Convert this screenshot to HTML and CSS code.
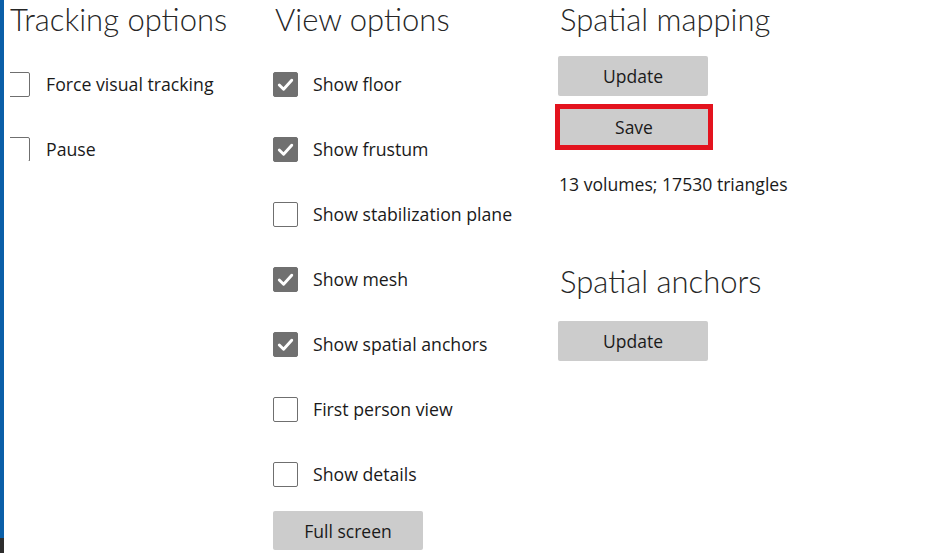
FILE: index.html
```html
<!DOCTYPE html>
<html>
<head>
<meta charset="utf-8">
<link rel="stylesheet" href="styles.css">
</head>
<body>
<div class="page">
  <div class="strip"><div class="strip-blue"></div><div class="strip-dark"></div></div>
  <div class="content">
    <section class="col col-tracking">
      <h2 class="heading">Tracking options</h2>
      <ul class="options">
        <li class="option"><span class="box"></span><span class="label">Force visual tracking</span></li>
        <li class="option"><span class="box"></span><span class="label">Pause</span></li>
      </ul>
    </section>
    <section class="col col-view">
      <h2 class="heading">View options</h2>
      <ul class="options">
        <li class="option"><span class="box checked"><svg viewBox="0 0 24 24"><path d="M5.5 12.5 L10 17 L18.5 7.5"/></svg></span><span class="label">Show floor</span></li>
        <li class="option"><span class="box checked"><svg viewBox="0 0 24 24"><path d="M5.5 12.5 L10 17 L18.5 7.5"/></svg></span><span class="label">Show frustum</span></li>
        <li class="option"><span class="box"></span><span class="label">Show stabilization plane</span></li>
        <li class="option"><span class="box checked"><svg viewBox="0 0 24 24"><path d="M5.5 12.5 L10 17 L18.5 7.5"/></svg></span><span class="label">Show mesh</span></li>
        <li class="option"><span class="box checked"><svg viewBox="0 0 24 24"><path d="M5.5 12.5 L10 17 L18.5 7.5"/></svg></span><span class="label">Show spatial anchors</span></li>
        <li class="option"><span class="box"></span><span class="label">First person view</span></li>
        <li class="option"><span class="box"></span><span class="label">Show details</span></li>
      </ul>
      <button class="btn btn-full">Full screen</button>
    </section>
    <section class="col col-spatial">
      <h2 class="heading">Spatial mapping</h2>
      <button class="btn btn-update">Update</button>
      <button class="btn btn-save">Save</button>
      <p class="stats">13 volumes; 17530 triangles</p>
      <h2 class="heading heading-anchors">Spatial anchors</h2>
      <button class="btn btn-update2">Update</button>
    </section>
  </div>
</div>
</body>
</html>
```
FILE: styles.css
```css
* { box-sizing: border-box; }
html, body {
  margin: 0;
  padding: 0;
  background: #ffffff;
  width: 951px;
  height: 553px;
  overflow: hidden;
}
body {
  font-family: "Open Sans", "Noto Sans", sans-serif;
  color: #1a1a1a;
}
.page {
  display: flex;
  height: 553px;
}
.strip {
  width: 4px;
  display: flex;
  flex-direction: column;
}
.strip-blue { flex: 0 0 538px; background: #0a5fa8; }
.strip-dark { flex: 1; background: #2d2d2d; }
.content {
  display: grid;
  grid-template-columns: 263px 285px 1fr;
  padding-left: 6px;
}
.col {
  display: flex;
  flex-direction: column;
  align-items: flex-start;
}
.col-tracking .heading { padding-left: 0; }
.col-tracking .options { overflow: hidden; align-self: stretch; }
.col-tracking .box { margin-left: -5px; }
.col-tracking .label { margin-left: 16px; }
.heading {
  margin: 0;
  font-family: Lato, "Open Sans", sans-serif;
  font-weight: 300;
  font-size: 31px;
  line-height: 38px;
  color: #262626;
  white-space: nowrap;
  padding-left: 2px;
}
.options {
  list-style: none;
  margin: 34px 0 0 0;
  padding: 0;
  display: flex;
  flex-direction: column;
  gap: 41px;
}
.option {
  display: flex;
  align-items: center;
  height: 24px;
}
.box {
  width: 25px;
  height: 25px;
  border: 1px solid #6f6f6f;
  border-radius: 2px;
  background: #fff;
  flex: 0 0 auto;
  display: flex;
  align-items: center;
  justify-content: center;
}
.box.checked {
  background: #707070;
  border-color: #707070;
}
.box svg {
  width: 23px;
  height: 23px;
  fill: none;
  stroke: #ffffff;
  stroke-width: 3;
  stroke-linecap: round;
  stroke-linejoin: round;
}
.label {
  margin-left: 15px;
  font-size: 17.7px;
  line-height: 24px;
  white-space: nowrap;
}
.btn {
  font-family: "Open Sans", "Noto Sans", sans-serif;
  font-size: 17.5px;
  color: #1a1a1a;
  background: #cccccc;
  border: none;
  border-radius: 2px;
  width: 150px;
  height: 40px;
  padding: 0;
  display: flex;
  align-items: center;
  justify-content: center;
}
.btn-full { margin-top: 25px; height: 39px; }
.btn-update { margin-top: 18px; }
.btn-save {
  margin-top: 8px;
  margin-left: -3px;
  width: 158px;
  height: 46px;
  border: 5px solid #e3131e;
  border-radius: 0;
}
.stats {
  margin: 22px 0 0 1px;
  font-size: 17.6px;
  line-height: 24px;
}
.heading-anchors { margin-top: 66px; }
.btn-update2 { margin-top: 21px; }
```
